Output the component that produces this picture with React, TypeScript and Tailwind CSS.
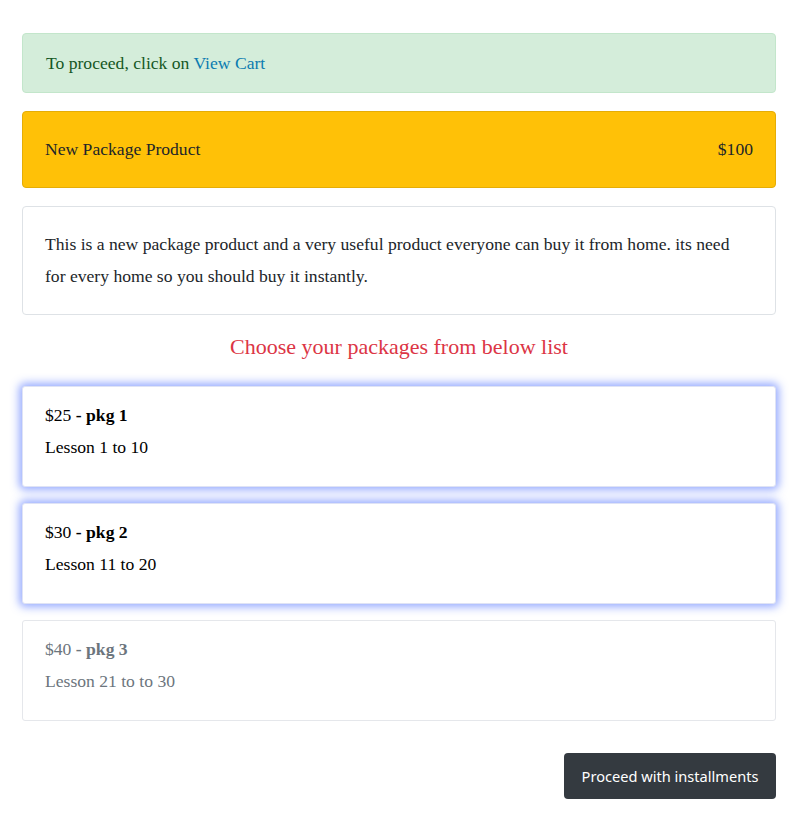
const packages = [
  { price: "$25", name: "pkg 1", lessons: "Lesson 1 to 10", active: true },
  { price: "$30", name: "pkg 2", lessons: "Lesson 11 to 20", active: true },
  { price: "$40", name: "pkg 3", lessons: "Lesson 21 to to 30", active: false },
];

export default function App() {
  return (
    <div className="min-h-[819px] bg-white font-['Liberation_Serif',serif] text-[17.6px] leading-6 text-black">
      <div className="ml-[22px] w-[754px] pt-[33px] pb-5">
        <div className="rounded border border-[#c3e6cb] bg-[#d4edda] px-[23px] pt-[17px] pb-[17px] text-[#155724]">
          To proceed, click on <a className="text-[#0b7bb0]">View Cart</a>
        </div>

        <div className="mt-[18px] flex items-center justify-between rounded border border-[#e5ad06] bg-[#ffc107] px-[22px] pt-[25px] pb-[26px] text-[#212529]">
          <span>New Package Product</span>
          <span>$100</span>
        </div>

        <div className="mt-[18px] rounded border border-[#dee2e6] px-[22px] pt-[21px] pb-[22px] leading-8 text-[#212529]">
          This is a new package product and a very useful product everyone can buy it from home. its need for every home so you should buy it instantly.
        </div>

        <h2 className="mt-4 mb-[23px] text-center text-[22px] leading-8 text-[#dc3545]">
          Choose your packages from below list
        </h2>

        <div className="flex flex-col gap-4">
          {packages.map((p) =>
            p.active ? (
              <div
                key={p.name}
                className="rounded-[3px] border border-[#dfe3f5] bg-white px-[22px] pt-4 pb-[27px] shadow-[0_0_8px_3px_rgba(50,90,255,0.5)]"
              >
                <div>
                  {p.price} <b>- {p.name}</b>
                </div>
                <div className="mt-2">{p.lessons}</div>
              </div>
            ) : (
              <div
                key={p.name}
                className="rounded-[3px] border border-[#e5e7eb] bg-white px-[22px] pt-4 pb-[27px] text-[#6c757d]"
              >
                <div>
                  {p.price} <b>- {p.name}</b>
                </div>
                <div className="mt-2">{p.lessons}</div>
              </div>
            )
          )}
        </div>

        <div className="mt-8 flex justify-end">
          <button className="h-[46px] w-[212px] rounded bg-[#343a40] font-['Noto_Sans',sans-serif] text-[14.6px] text-white">
            Proceed with installments
          </button>
        </div>
      </div>
    </div>
  );
}
